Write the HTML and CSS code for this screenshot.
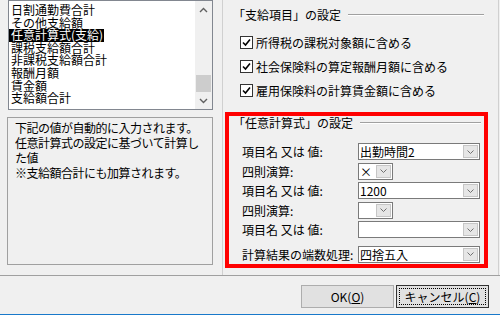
FILE: index.html
```html
<!DOCTYPE html>
<html lang="ja">

<head>
    <meta charset="UTF-8">
    <title>支給項目の設定</title>
    <link rel="stylesheet" href="styles.css">
</head>

<body>
    <div class="dialog">
        <div class="main">
            <!-- 左側: 項目リストと説明 -->
            <div class="left">
                <div class="listbox">
                    <ul class="items">
                        <li>日割通勤費合計</li>
                        <li>その他支給額</li>
                        <li class="selected"><span>任意計算式(支給)</span></li>
                        <li>課税支給額合計</li>
                        <li>非課税支給額合計</li>
                        <li>報酬月額</li>
                        <li>賃金額</li>
                        <li>支給額合計</li>
                    </ul>
                    <div class="scrollbar">
                        <span class="sb-btn">
                            <svg width="9" height="6" viewBox="0 0 9 6"><path d="M1 5l3.5-3.5L8 5" fill="none" stroke="#606060" stroke-width="1.4"/></svg>
                        </span>
                        <div class="track"><div class="thumb"></div></div>
                        <span class="sb-btn">
                            <svg width="9" height="6" viewBox="0 0 9 6"><path d="M1 1l3.5 3.5L8 1" fill="none" stroke="#606060" stroke-width="1.4"/></svg>
                        </span>
                    </div>
                </div>
                <div class="desc">
                    下記の値が自動的に入力されます。任意計算式の設定に基づいて計算した値<br>
                    ※支給額合計にも加算されます。
                </div>
            </div>

            <!-- 右側: 設定 -->
            <div class="right">
                <div class="top-group">
                    <div class="group-title"><span>「支給項目」の設定</span><i class="rule"></i></div>
                    <div class="checks">
                        <label class="check">
                            <svg width="13" height="13" viewBox="0 0 13 13"><rect x="0.5" y="0.5" width="12" height="12" fill="#fff" stroke="#333"/><path d="M3 6.5l2.5 2.5 4.5-5.5" fill="none" stroke="#000" stroke-width="1.6"/></svg>
                            所得税の課税対象額に含める
                        </label>
                        <label class="check">
                            <svg width="13" height="13" viewBox="0 0 13 13"><rect x="0.5" y="0.5" width="12" height="12" fill="#fff" stroke="#333"/><path d="M3 6.5l2.5 2.5 4.5-5.5" fill="none" stroke="#000" stroke-width="1.6"/></svg>
                            社会保険料の算定報酬月額に含める
                        </label>
                        <label class="check">
                            <svg width="13" height="13" viewBox="0 0 13 13"><rect x="0.5" y="0.5" width="12" height="12" fill="#fff" stroke="#333"/><path d="M3 6.5l2.5 2.5 4.5-5.5" fill="none" stroke="#000" stroke-width="1.6"/></svg>
                            雇用保険料の計算賃金額に含める
                        </label>
                    </div>
                </div>

                <div class="formula">
                    <div class="group-title"><span>「任意計算式」の設定</span><i class="rule"></i></div>
                    <div class="rows">
                        <div class="row">
                            <span class="lbl">項目名 又は 値:</span>
                            <div class="combo"><span class="val">出勤時間2</span><span class="drop"><svg width="7" height="4" viewBox="0 0 7 4"><path d="M0.5 0.5l3 3 3-3" fill="none" stroke="#707070"/></svg></span></div>
                        </div>
                        <div class="row">
                            <span class="lbl">四則演算:</span>
                            <div class="combo small"><span class="val">×</span><span class="drop"><svg width="7" height="4" viewBox="0 0 7 4"><path d="M0.5 0.5l3 3 3-3" fill="none" stroke="#707070"/></svg></span></div>
                        </div>
                        <div class="row">
                            <span class="lbl">項目名 又は 値:</span>
                            <div class="combo"><span class="val">1200</span><span class="drop"><svg width="7" height="4" viewBox="0 0 7 4"><path d="M0.5 0.5l3 3 3-3" fill="none" stroke="#707070"/></svg></span></div>
                        </div>
                        <div class="row">
                            <span class="lbl">四則演算:</span>
                            <div class="combo small"><span class="val"></span><span class="drop"><svg width="7" height="4" viewBox="0 0 7 4"><path d="M0.5 0.5l3 3 3-3" fill="none" stroke="#707070"/></svg></span></div>
                        </div>
                        <div class="row">
                            <span class="lbl">項目名 又は 値:</span>
                            <div class="combo"><span class="val"></span><span class="drop"><svg width="7" height="4" viewBox="0 0 7 4"><path d="M0.5 0.5l3 3 3-3" fill="none" stroke="#707070"/></svg></span></div>
                        </div>
                        <div class="row last">
                            <span class="lbl">計算結果の端数処理:</span>
                            <div class="combo"><span class="val">四捨五入</span><span class="drop"><svg width="7" height="4" viewBox="0 0 7 4"><path d="M0.5 0.5l3 3 3-3" fill="none" stroke="#707070"/></svg></span></div>
                        </div>
                    </div>
                </div>
            </div>
        </div>

        <div class="footer">
            <button class="btn">OK(<u>O</u>)</button>
            <button class="btn cancel">キャンセル(<u>C</u>)</button>
        </div>
    </div>
</body>

</html>
```

FILE: styles.css
```css
body {
    margin: 0;
    background-color: #f0f0f0;
    font-family: "Noto Sans CJK JP", sans-serif;
    font-size: 12px;
    color: #000;
}

.dialog {
    width: 500px;
    height: 315px;
    display: flex;
    flex-direction: column;
    overflow: hidden;
}

.main {
    display: flex;
    height: 275px;
    border-bottom: 1px solid #a0a0a0;
}

/* 左側 */
.left {
    width: 222px;
    padding-left: 8px;
    box-sizing: border-box;
}

.listbox {
    width: 205px;
    height: 110px;
    box-sizing: border-box;
    border: 1px solid #828790;
    background-color: #fff;
    display: flex;
}

.items {
    list-style: none;
    margin: 0;
    padding: 3px 0 0 0;
    flex: 1;
    overflow: hidden;
}

.items li {
    height: 12.6px;
    line-height: 12.6px;
    padding-left: 2px;
    white-space: nowrap;
}

.items li.selected {
    padding-left: 0;
}

.items li.selected span {
    display: inline-block;
    height: 12.6px;
    padding: 0 1px 0 2px;
    background-color: #000;
    color: #fff;
}

.scrollbar {
    width: 17px;
    display: flex;
    flex-direction: column;
    background-color: #f0f0f0;
}

.sb-btn {
    height: 17px;
    display: flex;
    align-items: center;
    justify-content: center;
}

.track {
    flex: 1;
    display: flex;
    flex-direction: column;
    justify-content: flex-end;
}

.thumb {
    height: 17px;
    margin: 0 1px;
    background-color: #cdcdcd;
}

.desc {
    width: 206px;
    height: 148px;
    box-sizing: border-box;
    margin: 7px 0 0 -1px;
    padding: 2px 6px 0 7px;
    border: 1px solid #a0a0a0;
    line-height: 15px;
    letter-spacing: -0.5px;
}

/* 右側 */
.right {
    width: 277px;
    box-sizing: border-box;
    border-left: 1px solid #d0d0d0;
    border-right: 1px solid #d0d0d0;
}

.group-title {
    display: flex;
    align-items: center;
    height: 14px;
    line-height: 14px;
    white-space: nowrap;
}

.rule {
    flex: 1;
    height: 0;
    margin-left: 7px;
    border-top: 1px solid #a0a0a0;
    border-bottom: 1px solid #fff;
}

.top-group {
    padding: 8px 14px 0 10px;
}

.checks {
    margin-top: 8px;
    padding-left: 7px;
}

.check {
    display: flex;
    align-items: center;
    gap: 3px;
    height: 24px;
}

.formula {
    width: 263px;
    height: 156px;
    box-sizing: border-box;
    margin: 10px 0 0 2px;
    padding: 0 3px 0 4px;
    border: 4px solid #ff0000;
}

.rows {
    margin-top: 12px;
    padding-left: 9px;
}

.row {
    display: flex;
    align-items: center;
    height: 19.5px;
}

.row.last {
    margin-top: 5px;
}

.lbl {
    width: 116px;
    white-space: nowrap;
}

.combo {
    width: 122px;
    height: 17px;
    box-sizing: border-box;
    border: 1px solid #7a7a7a;
    background-color: #fff;
    display: flex;
}

.combo.small {
    width: 35px;
}

.combo .val {
    flex: 1;
    padding-left: 1px;
    line-height: 15px;
    white-space: nowrap;
}

.combo .drop {
    width: 15px;
    margin: 1px 1px 1px 0;
    box-sizing: border-box;
    border: 1px solid #c6c6c6;
    background-color: #e6e6e6;
    display: flex;
    align-items: center;
    justify-content: center;
}

/* ボタン */
.footer {
    height: 39px;
    box-sizing: border-box;
    padding: 9px 11px 0 0;
    border-bottom: 1px solid #1979ca;
    display: flex;
    justify-content: flex-end;
    gap: 2px;
}

.btn {
    width: 93px;
    height: 23px;
    padding: 0;
    font: inherit;
    color: #000;
    background-color: #e1e1e1;
    border: 1px solid #adadad;
}

.btn.cancel {
    border-color: #333;
    outline: 1px dotted #000;
    outline-offset: -4px;
}
```
